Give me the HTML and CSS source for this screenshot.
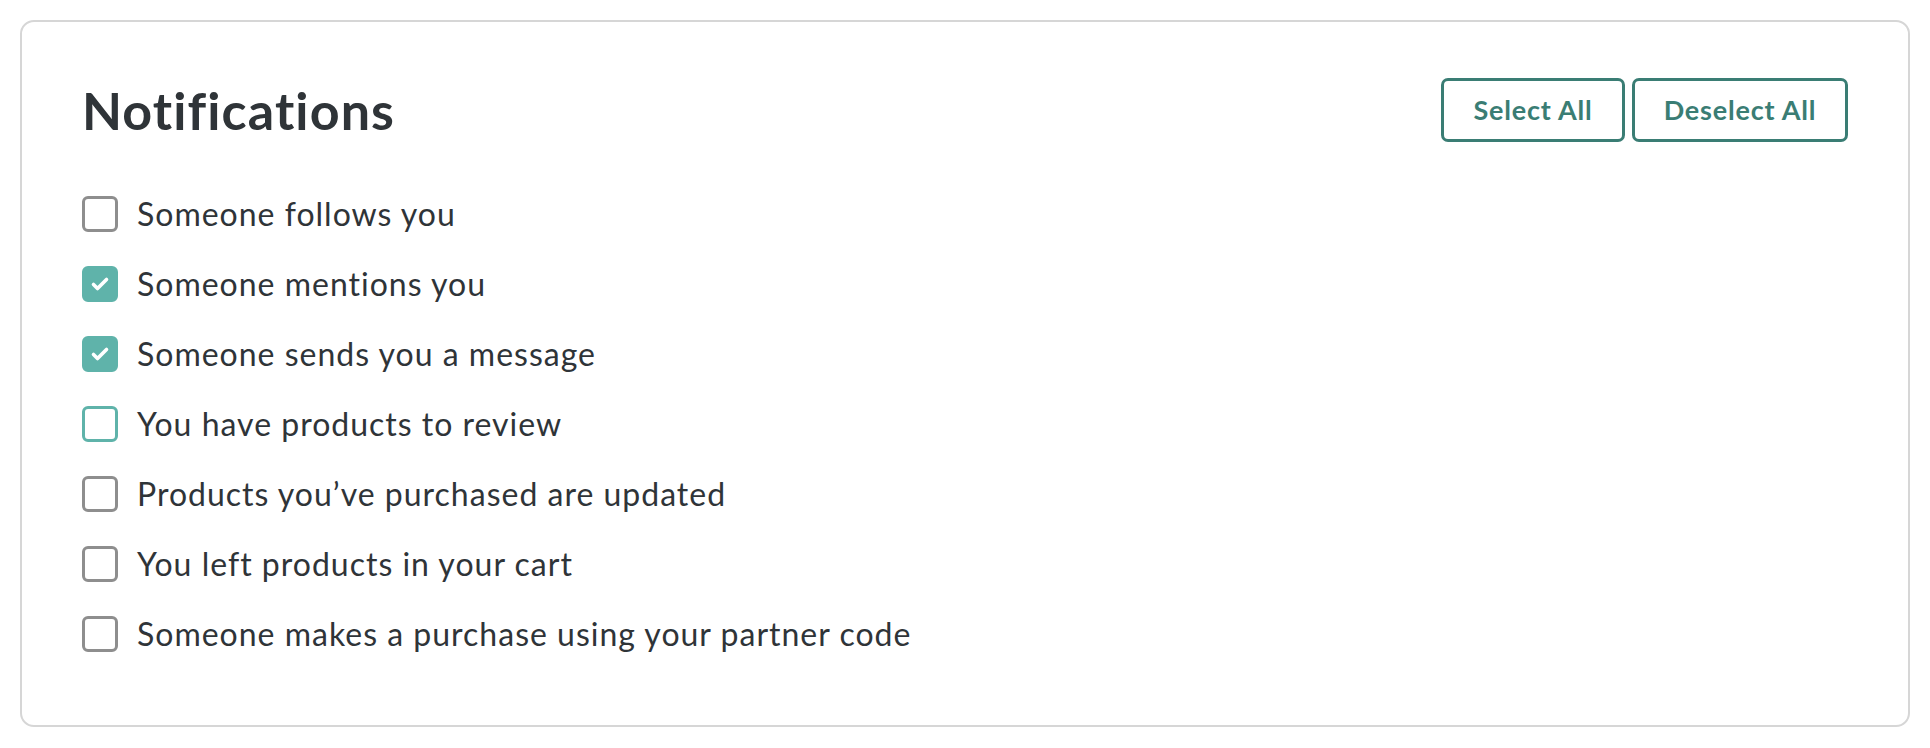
FILE: index.html
```html
<!DOCTYPE html>
<html lang="en">
<head>
<meta charset="utf-8">
<title>Notifications</title>
<link rel="stylesheet" href="styles.css">
</head>
<body>
<section class="card">
  <header class="card-header">
    <h1 class="title">Notifications</h1>
    <div class="actions">
      <button class="btn btn-select" type="button">Select All</button>
      <button class="btn btn-deselect" type="button">Deselect All</button>
    </div>
  </header>
  <ul class="options">
    <li class="option"><span class="box"></span><span class="label">Someone follows you</span></li>
    <li class="option"><span class="box checked"><svg viewBox="3 3 30 30" class="tick"><path d="M11.5 18.5 L15.5 22.5 L24.5 13.5" fill="none" stroke="#fff" stroke-width="3.6" stroke-linecap="round" stroke-linejoin="round"/></svg></span><span class="label">Someone mentions you</span></li>
    <li class="option"><span class="box checked"><svg viewBox="3 3 30 30" class="tick"><path d="M11.5 18.5 L15.5 22.5 L24.5 13.5" fill="none" stroke="#fff" stroke-width="3.6" stroke-linecap="round" stroke-linejoin="round"/></svg></span><span class="label">Someone sends you a message</span></li>
    <li class="option"><span class="box focused"></span><span class="label">You have products to review</span></li>
    <li class="option"><span class="box"></span><span class="label">Products you’ve purchased are updated</span></li>
    <li class="option"><span class="box"></span><span class="label">You left products in your cart</span></li>
    <li class="option"><span class="box"></span><span class="label">Someone makes a purchase using your partner code</span></li>
  </ul>
</section>
</body>
</html>
```

FILE: styles.css
```css
html, body {
  margin: 0;
  padding: 0;
  background: #ffffff;
}
body {
  padding: 20px;
  font-family: "Lato", "Liberation Sans", sans-serif;
  color: #2f3438;
}
.card {
  border: 2px solid #d6d6d6;
  border-radius: 14px;
  padding: 56px 60px 73px 60px;
}
.card-header {
  display: flex;
  justify-content: space-between;
  align-items: center;
  height: 63px;
  margin-bottom: 55px;
}
.title {
  margin: 0;
  font-size: 52px;
  font-weight: 700;
  letter-spacing: 1.1px;
  color: #2f3438;
}
.actions {
  display: flex;
  gap: 7px;
}
.btn {
  height: 64px;
  padding: 0;
  border: 3px solid #3a7d74;
  border-radius: 7px;
  background: #fff;
  color: #3a7d74;
  font-family: "Lato", "Liberation Sans", sans-serif;
  font-size: 27px;
  font-weight: 700;
  letter-spacing: 0.8px;
  cursor: pointer;
}
.btn-select { width: 184px; }
.btn-deselect { width: 216px; }
.options {
  list-style: none;
  margin: 0;
  padding: 0;
  display: flex;
  flex-direction: column;
  gap: 34px;
}
.option {
  display: flex;
  align-items: center;
  gap: 19px;
  height: 36px;
}
.box {
  box-sizing: border-box;
  width: 36px;
  height: 36px;
  border: 3px solid #8e8e8e;
  border-radius: 6px;
  flex: none;
  display: flex;
  align-items: center;
  justify-content: center;
}
.box.checked {
  background: #5fb3aa;
  border-color: #5fb3aa;
}
.box.focused {
  border-color: #5fb3aa;
}
.tick {
  width: 30px;
  height: 30px;
  display: block;
}
.label {
  font-size: 32px;
  font-weight: 400;
  letter-spacing: 1px;
  line-height: 36px;
}
```
